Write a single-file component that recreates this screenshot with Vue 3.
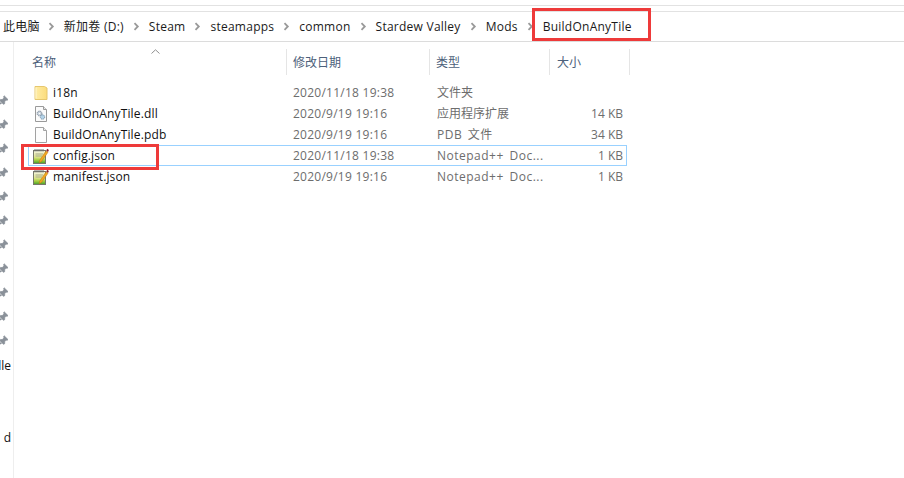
<template>
  <div class="explorer">
    <div class="top-strip"></div>
    <nav class="breadcrumb">
      <template v-for="(crumb, i) in crumbs" :key="crumb">
        <span class="crumb">
          {{ crumb }}
          <span v-if="i === crumbs.length - 1" class="mark mark-crumb"></span>
        </span>
        <span v-if="i < crumbs.length - 1" class="chevron">
          <svg width="7" height="9" viewBox="0 0 7 9">
            <path d="M1.5 1.2 L4.8 4.5 L1.5 7.8" fill="none" stroke="#999" stroke-width="1.8" />
          </svg>
        </span>
      </template>
    </nav>

    <div class="body">
      <aside class="sidebar">
        <div v-for="(item, i) in sidebar" :key="i" class="side-row">
          <svg v-if="item === 'pin'" class="pin" width="11" height="11" viewBox="0 0 11 11">
            <path d="M6.2 0.8 L10 4.6 L9 5.4 L8.2 5 L6.6 6.8 L6.8 8.4 L5.6 9.4 L1.6 5.4 L2.6 4.4 L4.2 4.6 L6 2.8 L5.6 1.6 Z" fill="#8a9199" stroke="#8a9199" stroke-width="0.7" />
            <path d="M2.6 7 L0.4 10.6 L4 8.4 Z" fill="#8a9199" />
          </svg>
          <span v-else class="side-text">{{ item }}</span>
        </div>
      </aside>

      <main class="list">
        <div class="columns">
          <div class="col col-name">
            名称
            <svg class="sort" width="9" height="5" viewBox="0 0 9 5">
              <path d="M0.5 4.5 L4.5 0.8 L8.5 4.5" fill="none" stroke="#8f8f8f" />
            </svg>
          </div>
          <div class="col">修改日期</div>
          <div class="col">类型</div>
          <div class="col col-size">大小</div>
        </div>

        <div class="rows">
          <div v-for="file in files" :key="file.name" class="row" :class="{ selected: file.selected }">
            <div class="cell-name">
              <svg v-if="file.icon === 'folder'" class="icon" width="16" height="16" viewBox="-0.5 0 16 16">
                <defs>
                  <linearGradient id="folderFill" x1="0" y1="0" x2="1" y2="0">
                    <stop offset="0" stop-color="#ffeda6" />
                    <stop offset="1" stop-color="#fbdc7c" />
                  </linearGradient>
                </defs>
                <path d="M2.5 1.5 H12 L14.5 3 V14.5 H2.5 Z" fill="url(#folderFill)" stroke="#e6c76e" />
                <path d="M3.5 2.5 V13.5" stroke="#fff6d0" />
              </svg>
              <svg v-else-if="file.icon === 'dll'" class="icon" width="16" height="16" viewBox="-1 0 16 16">
                <path d="M2.5 0.5 H10.5 L13.5 3.5 V15.5 H2.5 Z" fill="#fbfbfb" stroke="#9a9a9a" />
                <path d="M10.5 0.5 V3.5 H13.5" fill="#e6e6e6" stroke="#9a9a9a" />
                <circle cx="6.5" cy="7.5" r="2.4" fill="#c3ced9" stroke="#7c8a99" stroke-dasharray="1.2 0.6" />
                <circle cx="9.5" cy="11" r="2.2" fill="#b4d4ea" stroke="#7590a5" stroke-dasharray="1.2 0.6" />
                <circle cx="6.5" cy="7.5" r="0.8" fill="#fff" />
              </svg>
              <svg v-else-if="file.icon === 'file'" class="icon" width="16" height="16" viewBox="-1 0 16 16">
                <path d="M2.5 0.5 H10.5 L13.5 3.5 V15.5 H2.5 Z" fill="#fdfdfd" stroke="#a2a2a2" />
                <path d="M10.5 0.5 V3.5 H13.5" fill="#ececec" stroke="#a2a2a2" />
              </svg>
              <svg v-else class="icon note" width="16" height="16" viewBox="-1 0 16 16">
                <defs>
                  <linearGradient id="noteFill" x1="0" y1="0" x2="0" y2="1">
                    <stop offset="0" stop-color="#f6f6e4" />
                    <stop offset="0.5" stop-color="#dfe58e" />
                    <stop offset="0.75" stop-color="#a3cb3c" />
                    <stop offset="1" stop-color="#3f9c2d" />
                  </linearGradient>
                </defs>
                <rect x="0.5" y="2.5" width="12" height="13" fill="url(#noteFill)" stroke="#77786a" />
                <path d="M2 1 V3.5 M4 1 V3.5 M6 1 V3.5 M8 1 V3.5 M10 1 V3.5" stroke="#6b6b6b" />
                <path d="M2.5 6 H10 M2.5 8 H9" stroke="#a7a98c" />
                <path d="M6.6 12.4 L13 3 L15 4.3 L8.4 13.6 L6.2 14.8 Z" fill="#f2a61f" stroke="#b97212" stroke-width="0.5" />
                <path d="M13.2 2.6 L14.2 0.8 L15.9 2 L15 4 Z" fill="#8c1f2a" />
              </svg>
              <span class="file-name">{{ file.name }}</span>
              <span v-if="file.selected" class="mark mark-file"></span>
            </div>
            <div class="cell cell-date">{{ file.date }}</div>
            <div class="cell cell-type" :class="{ cjk: file.cjk }">{{ file.type }}</div>
            <div class="cell cell-size">{{ file.size }}</div>
          </div>
        </div>
      </main>
    </div>
  </div>
</template>

<script setup>
const crumbs = ["此电脑", "新加卷 (D:)", "Steam", "steamapps", "common", "Stardew Valley", "Mods", "BuildOnAnyTile"];

const sidebar = ["pin", "pin", "pin", "pin", "pin", "pin", "pin", "pin", "pin", "pin", "pin", "lle", "", "", "d"];

const files = [
  { name: "i18n", icon: "folder", date: "2020/11/18 19:38", type: "文件夹", cjk: true, size: "" },
  { name: "BuildOnAnyTile.dll", icon: "dll", date: "2020/9/19 19:16", type: "应用程序扩展", cjk: true, size: "14 KB" },
  { name: "BuildOnAnyTile.pdb", icon: "file", date: "2020/9/19 19:16", type: "PDB 文件", size: "34 KB" },
  { name: "config.json", icon: "note", date: "2020/11/18 19:38", type: "Notepad++ Doc...", size: "1 KB", selected: true },
  { name: "manifest.json", icon: "note", date: "2020/9/19 19:16", type: "Notepad++ Doc...", size: "1 KB" },
];
</script>

<style>
html,
body {
  margin: 0;
  background: #fff;
}
</style>

<style scoped>
.explorer {
  width: 904px;
  height: 478px;
  overflow: hidden;
  background: #fff;
  font-family: "Open Sans", "Noto Sans CJK SC", sans-serif;
  font-size: 12px;
  line-height: 16px;
  color: #1a1a1a;
}

.top-strip {
  height: 5px;
  margin-bottom: 5px;
  border-bottom: 1px solid #e2e2e2;
}

.breadcrumb {
  display: flex;
  align-items: center;
  height: 29px;
  padding-left: 3px;
  border-top: 1px solid #e2e2e2;
  border-bottom: 1px solid #dcdcdc;
  white-space: nowrap;
  letter-spacing: 0.25px;
}

.crumb {
  position: relative;
}

.crumb:first-child {
  margin-right: -1px;
}

.chevron {
  display: flex;
  justify-content: center;
  width: 25px;
}

.mark {
  position: absolute;
  border: 3px solid #ee3a3a;
  box-sizing: border-box;
  pointer-events: none;
}

.mark-crumb {
  left: -11px;
  right: -19px;
  top: -11px;
  bottom: -6px;
}

.mark-file {
  left: -7px;
  top: -4px;
  width: 138px;
  height: 26px;
}

.body {
  display: flex;
  height: 436px;
}

.sidebar {
  width: 13px;
  flex: none;
  padding-top: 46px;
  border-right: 1px solid #eeeeee;
  overflow: hidden;
}

.side-row {
  display: flex;
  align-items: center;
  justify-content: flex-end;
  height: 24.1px;
  overflow: hidden;
}

.pin {
  flex: none;
  margin-right: 4px;
}

.side-text {
  flex: none;
  margin-top: 2px;
  margin-right: 2px;
  color: #111;
}

.columns {
  display: grid;
  grid-template-columns: 273px 143px 120px 80px;
  height: 26px;
  margin-top: 7px;
}

.col {
  display: flex;
  align-items: center;
  padding-top: 2px;
  padding-left: 6px;
  border-right: 1px solid #e5e5e5;
  color: #4c607a;
}

.col-name {
  position: relative;
  padding-left: 18px;
}

.col-size {
  padding-left: 7px;
}

.sort {
  position: absolute;
  left: 137px;
  top: 0;
}

.rows {
  margin-top: 7px;
}

.row {
  display: grid;
  grid-template-columns: 259px 150px 120px 66px;
  align-items: center;
  width: 599px;
  height: 21px;
  box-sizing: border-box;
  margin-left: 14px;
}

.row.selected {
  box-shadow: inset 0 0 0 1px #99d1ff;
}

.cell-name {
  position: relative;
  display: flex;
  align-items: center;
  padding-left: 4px;
  color: #111;
  letter-spacing: 0.15px;
}

.icon {
  flex: none;
  width: 16px;
  height: 16px;
  margin-right: 5px;
}

.note {
  overflow: visible;
}

.cell {
  color: #6d6d6d;
}

.cell-date {
  padding-left: 6px;
  letter-spacing: 0.25px;
}

.cell-type {
  letter-spacing: 0.5px;
  word-spacing: 2px;
}

.cell-type.cjk {
  letter-spacing: 0;
}

.cell-size {
  text-align: right;
}
</style>
